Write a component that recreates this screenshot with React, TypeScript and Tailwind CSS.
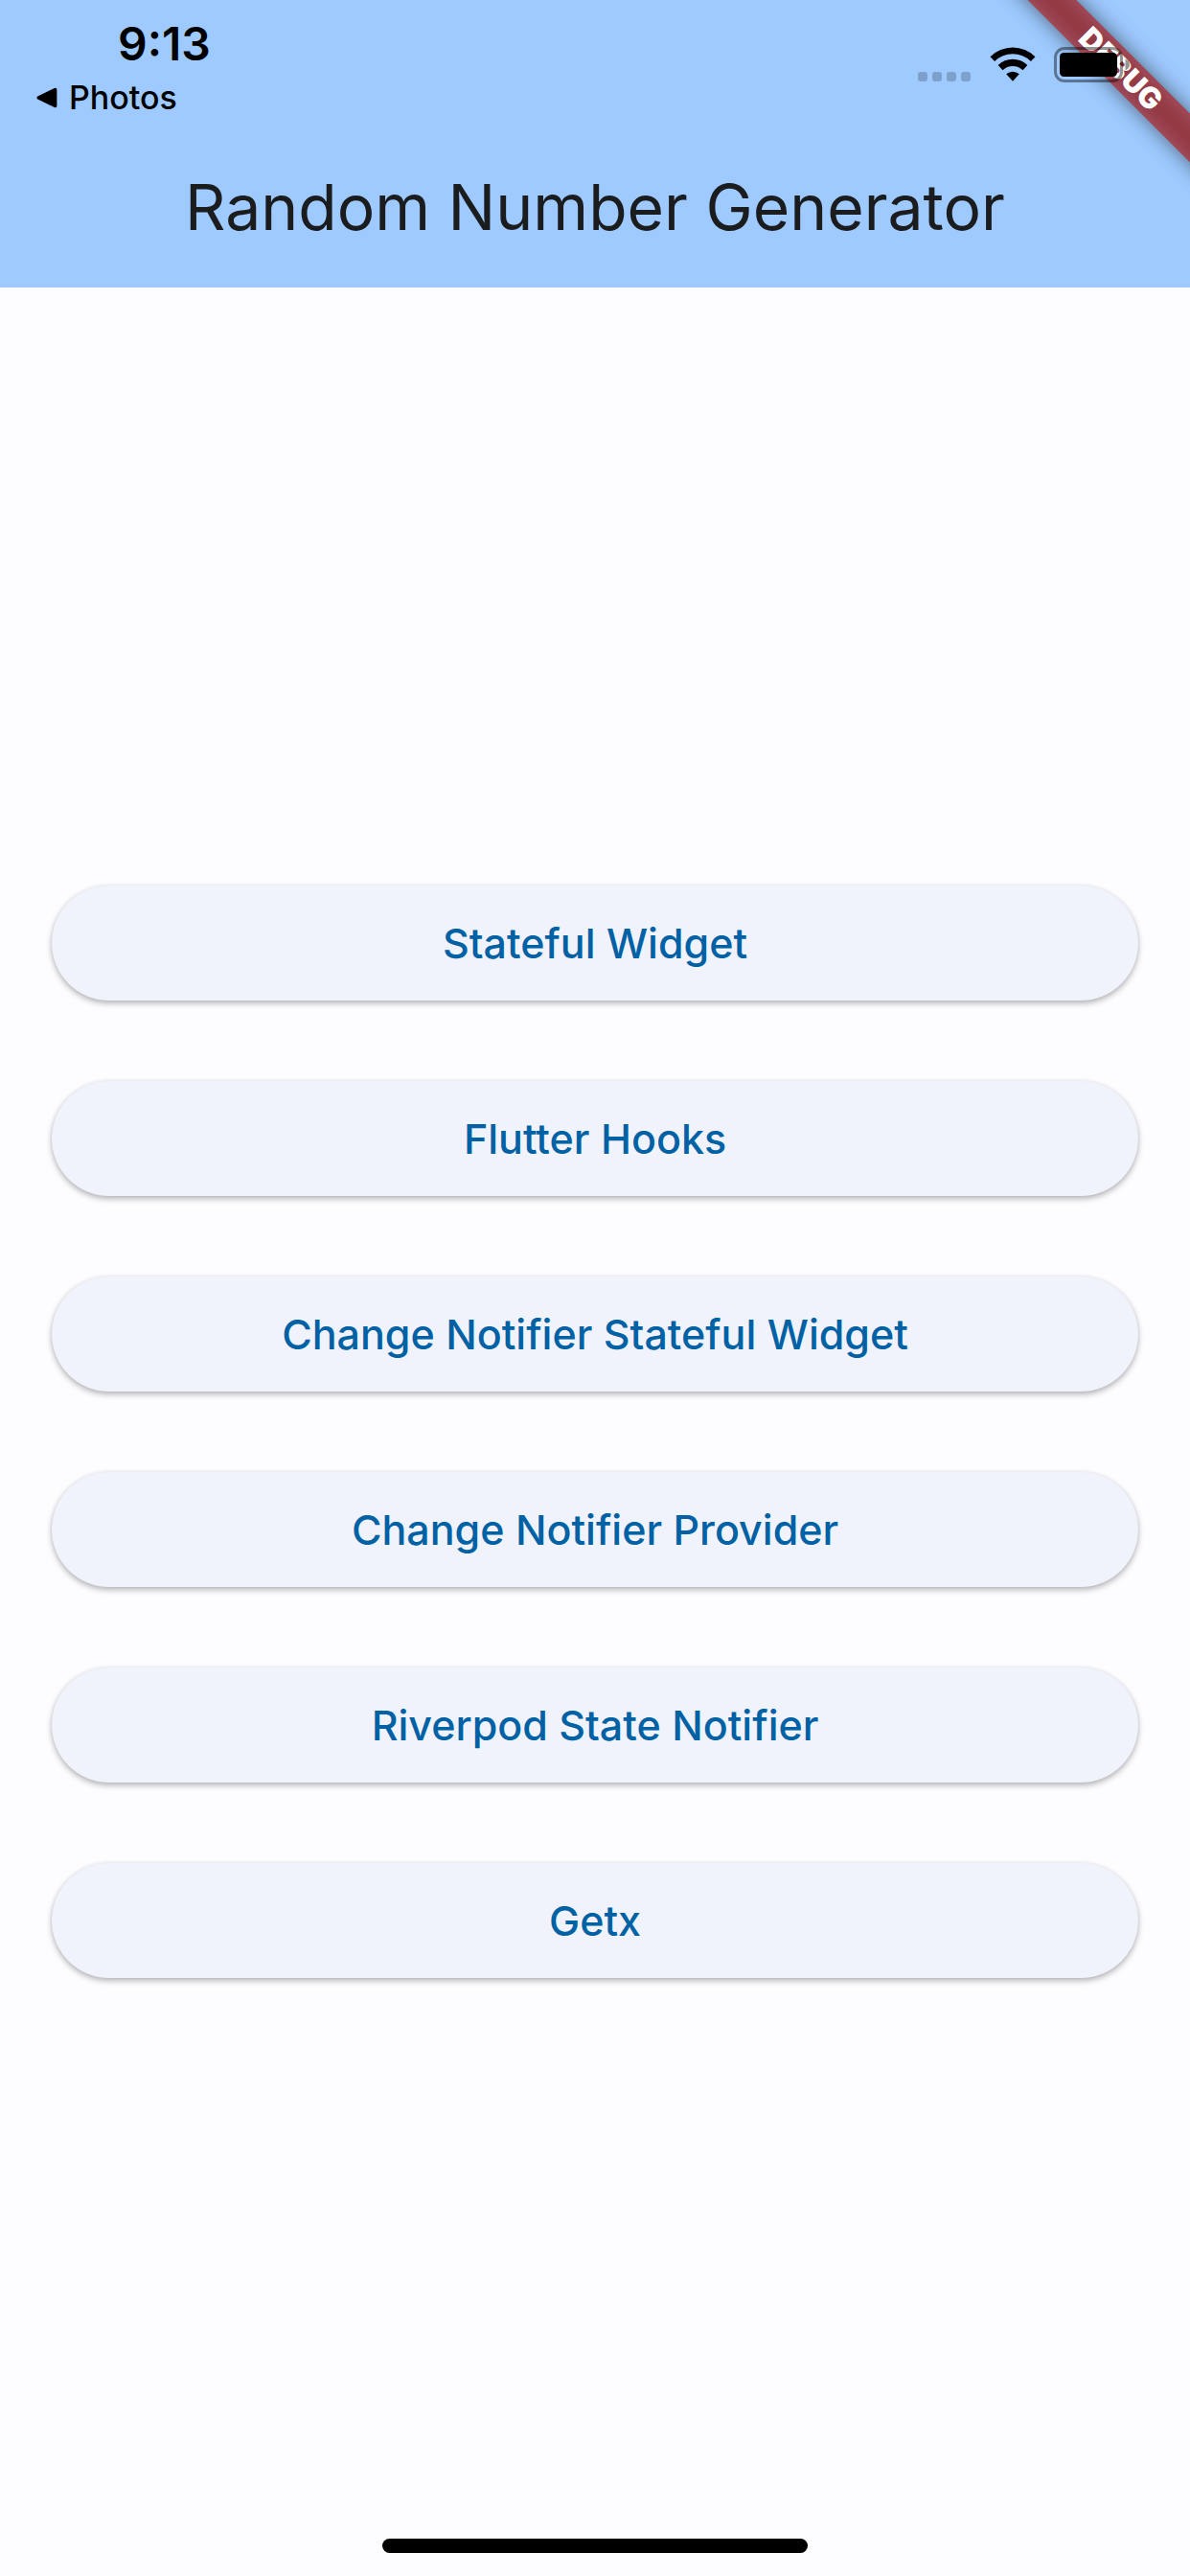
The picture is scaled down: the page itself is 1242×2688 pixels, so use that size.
const screens = [
  'Stateful Widget',
  'Flutter Hooks',
  'Change Notifier Stateful Widget',
  'Change Notifier Provider',
  'Riverpod State Notifier',
  'Getx',
];

function CellularDots() {
  return (
    <svg className="mt-[26px] h-[10px] w-[55px] fill-black/20" viewBox="0 0 55 10" aria-hidden="true">
      <rect x="0" width="10" height="10" rx="3" />
      <rect x="15" width="10" height="10" rx="3" />
      <rect x="30" width="10" height="10" rx="3" />
      <rect x="45" width="10" height="10" rx="3" />
    </svg>
  );
}

function WifiIcon() {
  return (
    <svg className="ml-5 h-9 w-12" viewBox="0 0 48 36" role="img" aria-label="Wi-Fi">
      <path d="M0.5 10.2 A33.5 33.5 0 0 1 47.5 10.2 L42.9 15 A27 27 0 0 0 5.1 15 Z" />
      <path d="M8.7 18.9 A21.8 21.8 0 0 1 39.3 18.9 L34.5 24.2 A15 15 0 0 0 13.5 24.2 Z" />
      <path d="M17.2 28.3 A10.4 10.4 0 0 1 30.8 28.3 L24 35.8 Z" />
    </svg>
  );
}

function BatteryIcon() {
  return (
    <svg className="ml-[19px] h-[37px] w-[80px]" viewBox="0 0 80 37" role="img" aria-label="Battery">
      <rect x="1.5" y="1.5" width="69" height="34" rx="9.5" fill="none" stroke="#000" strokeOpacity="0.42" strokeWidth="3" />
      <path d="M74.5 12.5 C77.5 13.8 79 16 79 18.5 C79 21 77.5 23.2 74.5 24.5 Z" fillOpacity="0.42" />
      <rect x="6" y="6" width="60" height="25" rx="4.5" />
    </svg>
  );
}

function DebugBanner() {
  return (
    <div className="pointer-events-none absolute top-0 right-0 h-[240px] w-[240px] overflow-hidden">
      <div className="absolute top-[54px] -right-[78px] h-9 w-[300px] rotate-45">
        <div className="absolute inset-0 bg-black/50 blur-[11px]" />
        <div className="relative flex h-9 items-center justify-center bg-[#b71c1c]/63 text-[31px] leading-9 font-black text-white">
          DEBUG
        </div>
      </div>
    </div>
  );
}

function StatusBar() {
  return (
    <div className="relative flex h-[132px] items-start justify-between pr-[62px] pl-[38px]">
      <div className="flex flex-col">
        <time className="pt-[22px] pl-[85px] text-[48px] leading-[48px] font-semibold">9:13</time>
        <button type="button" className="mt-[12px] flex items-center gap-3 text-[34px] leading-[40px] font-medium">
          <svg className="h-[22px] w-[22px]" viewBox="0 0 22 22" aria-hidden="true">
            <path d="M1.2 9.4 L18.8 0.9 Q21.4 0 21.4 2.8 V19.2 Q21.4 22 18.8 21.1 L1.2 12.6 Q-0.4 11 1.2 9.4 Z" />
          </svg>
          Photos
        </button>
      </div>
      <div className="flex items-start pt-[49px]">
        <CellularDots />
        <WifiIcon />
        <BatteryIcon />
      </div>
    </div>
  );
}

export default function App() {
  return (
    <div className="relative flex min-h-screen flex-col bg-[#fdfcff] font-['Inter','Liberation_Sans',sans-serif]">
      <header className="relative bg-[#9ecaff] text-black">
        <DebugBanner />
        <StatusBar />
        <h1 className="py-[44px] text-center text-[66px] leading-[80px] font-normal text-[#1a1c1e]">
          Random Number Generator
        </h1>
      </header>
      <main className="flex flex-1 flex-col justify-center gap-[84px] px-[54px]">
        {screens.map((name) => (
          <button
            key={name}
            type="button"
            className="h-[120px] w-full rounded-full bg-[#f0f3fb] text-[43px] leading-[60px] font-medium text-[#0061a4] shadow-[0_3px_6px_rgba(0,0,0,0.28),0_0_4px_rgba(0,0,0,0.06)]"
          >
            {name}
          </button>
        ))}
      </main>
      <div className="absolute bottom-6 left-1/2 h-[15px] w-[444px] -translate-x-1/2 rounded-full bg-black" />
    </div>
  );
}
